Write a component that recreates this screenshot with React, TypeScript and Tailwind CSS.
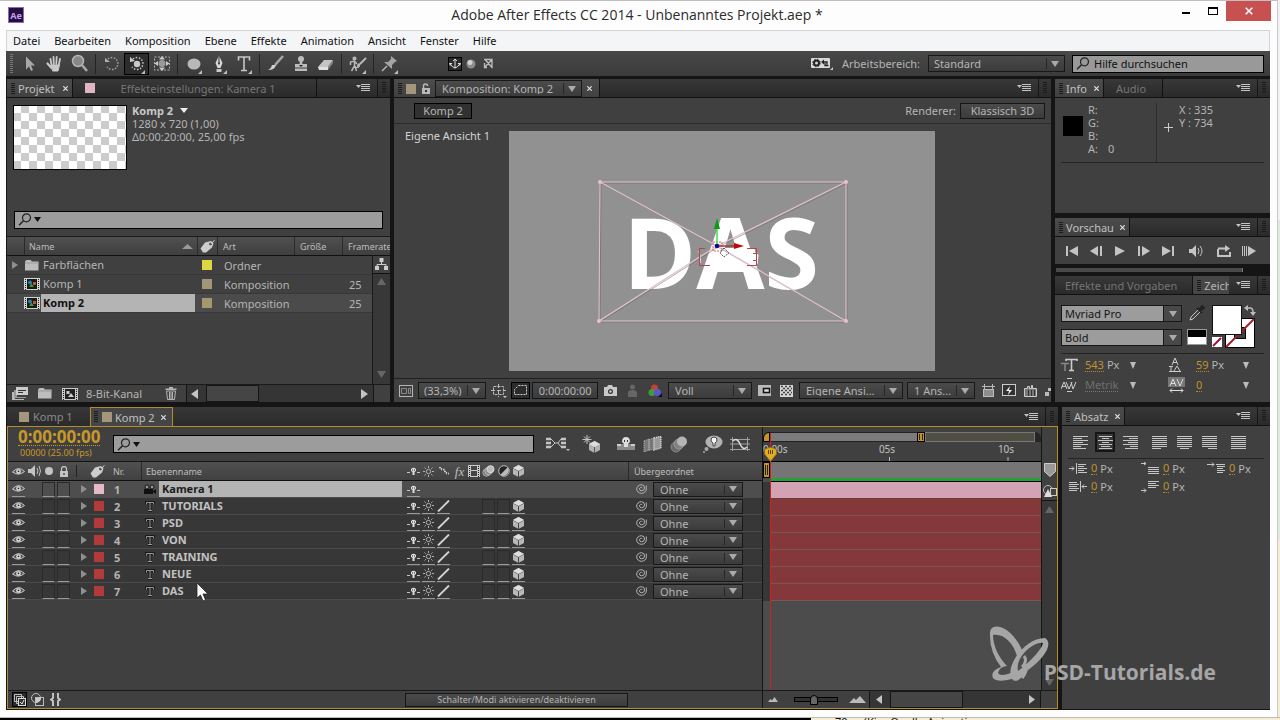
import React from 'react';

type Kids = { children?: React.ReactNode };

function Svg({ w, h, children, className = '' }: { w: number; h: number; className?: string } & Kids) {
  return (
    <svg width={w} height={h} viewBox={`0 0 ${w} ${h}`} className={`block shrink-0 ${className}`} aria-hidden="true">
      {children}
    </svg>
  );
}

const C = '#c4c4c4';

/* ---------- shared pieces ---------- */

function Grip() {
  return (
    <Svg w={4} h={12}>
      {[0, 2, 4, 6, 8, 10].map((y) => (
        <rect key={y} x={0} y={y} width={4} height={1} fill="#1b1b1b" />
      ))}
    </Svg>
  );
}

function PanelMenu() {
  return (
    <div className="ml-auto flex h-full items-stretch">
      <button aria-label="Bedienfeldmenü" className="flex w-[28px] items-center justify-center">
        <Svg w={14} h={8}>
          <path d="M0 1h5L2.500 4z" fill={C} />
          <path d="M5 .5h9M5 2.500h9M5 4.500h9M5 6.500h9" stroke={C} />
        </Svg>
      </button>
      <div className="flex w-[13px] items-center justify-center border-l border-[#161616]">
        <Grip />
      </div>
    </div>
  );
}

function TabBar({ children }: Kids) {
  return (
    <div className="flex h-[19px] shrink-0 items-stretch overflow-hidden whitespace-nowrap border-b border-[#111] bg-linear-to-b from-[#383838] to-[#2a2a2a]">
      {children}
      <PanelMenu />
    </div>
  );
}

function ActiveTab({ children, className = '' }: { className?: string } & Kids) {
  return (
    <div className={`-mb-px flex h-[19px] items-center border-r border-[#111] bg-linear-to-b from-[#4c4c4c] to-[#404040] pl-1 text-[#c0c0c0] ${className}`}>
      <Grip />
      {children}
    </div>
  );
}

function CloseX() {
  return (
    <button aria-label="Schließen" className="px-1">
      <Svg w={5} h={5}>
        <path d="M.3.3l4.400 4.400M4.700.3L.3 4.700" stroke="#e0e0e0" strokeWidth="1.200" />
      </Svg>
    </button>
  );
}

function Arrow() {
  return (
    <Svg w={8} h={6}>
      <path d="M0 0h8L4 6z" fill="#aaa" />
    </Svg>
  );
}

function Select({ label, value, className = '', box = 'w-[18px]', pad = 'pl-[6px]', field = false }: {
  label: string; value: string; className?: string; box?: string; pad?: string; field?: boolean;
}) {
  return (
    <div className={`relative shrink-0 border border-[#181818] ${field ? 'bg-[#9c9c9c]' : 'bg-linear-to-b from-[#4b4b4b] to-[#3b3b3b]'} ${className}`}>
      <select
        aria-label={label}
        defaultValue={value}
        className={`block h-full w-full appearance-none bg-transparent leading-none outline-none ${pad} ${field ? 'text-[#151515]' : 'text-[#b5b5b5]'}`}
      >
        <option>{value}</option>
      </select>
      <div className={`pointer-events-none absolute inset-y-0 right-0 flex items-center justify-center ${box} ${field ? 'border-l border-[#181818] bg-[#484848]' : ''}`}>
        {!field && <div className="absolute inset-y-[2px] left-0 w-px bg-[#262626]" />}
        <Arrow />
      </div>
    </div>
  );
}

function SearchGlyph({ color = '#222' }: { color?: string }) {
  return (
    <Svg w={14} h={13}>
      <circle cx={8.5} cy={4.8} r={4} fill="none" stroke={color} strokeWidth={1.2} />
      <path d="M5.500 7.800L1 12.300" stroke={color} strokeWidth={1.5} />
    </Svg>
  );
}

function SearchBox({ label, className = '' }: { label: string; className?: string }) {
  return (
    <label className={`flex h-[18px] items-center border border-black bg-[#9c9c9c] pl-[3px] ${className}`}>
      <SearchGlyph />
      <Svg w={7} h={5} className="ml-[2px]">
        <path d="M0 0h7L3.500 5z" fill="#111" />
      </Svg>
      <input aria-label={label} className="h-full min-w-0 flex-1 bg-transparent pl-1 text-[#111] outline-none" />
    </label>
  );
}

function Swatch({ color, className = '' }: { color: string; className?: string }) {
  return <span className={`block size-[10px] shrink-0 ${className}`} style={{ backgroundColor: color }} />;
}

function TagIcon() {
  return (
    <Svg w={15} h={13}>
      <path d="M.5 8.500L5 2.500 11 1l2.500 2.500-1.500 4L6 12.500H3z" fill="#cdcdcd" />
      <circle cx={10.500} cy={4} r={1.300} fill="#2c2c2c" />
      <path d="M10.500 4L14.500.5" stroke="#d8d8d8" />
    </Svg>
  );
}

/* ---------- title, menu, toolbar ---------- */

function TitleBar() {
  return (
    <header className="flex h-[30px] shrink-0 items-start border-t border-[#c2bfc0] bg-[#fdfdfd] pr-[6px]">
      <div className="ml-2 mt-[6px] flex size-4 items-center justify-center border border-[#8a6cc0] bg-[#26103f] text-[9px] font-bold leading-none text-[#c5a0f0]">Ae</div>
      <h1 className="flex-1 pl-[78px] pt-[3px] text-center font-['Open_Sans',sans-serif] text-[14px] leading-[22px] text-[#2b2b2b]">
        Adobe After Effects CC 2014 - Unbenanntes Projekt.aep *
      </h1>
      <button aria-label="Minimieren" className="flex h-5 w-[27px] items-center justify-center">
        <span className="mt-1 h-[2px] w-2 bg-black" />
      </button>
      <button aria-label="Maximieren" className="flex h-5 w-[27px] items-center justify-center">
        <span className="h-2 w-[10px] border border-t-2 border-black" />
      </button>
      <button aria-label="Fenster schließen" className="flex h-5 w-[45px] items-center justify-center bg-[#c75050]">
        <Svg w={8} h={8}>
          <path d="M.7.7l6.600 6.600M7.300.7L.7 7.300" stroke="#fff" strokeWidth={1.600} />
        </Svg>
      </button>
    </header>
  );
}

function MenuBar() {
  const items = ['Datei', 'Bearbeiten', 'Komposition', 'Ebene', 'Effekte', 'Animation', 'Ansicht', 'Fenster', 'Hilfe'];
  return (
    <nav className="flex h-[21px] shrink-0 items-center gap-[14px] border border-b-0 border-[#d3d3d5] bg-[#f4f5f7] pb-[2px] pl-[6px] text-[11px] text-[#111]">
      {items.map((t) => (
        <button key={t}>{t}</button>
      ))}
    </nav>
  );
}

const corner = <path d="M20 17l0 4-4 0z" fill="#bbb" />;

const tools: { name: string; icon: React.ReactNode; active?: boolean; sep?: boolean }[] = [
  { name: 'Auswahl', icon: <path d="M8 3.500v13l3-3 2 4.500 2-1-2-4.500h4z" fill="#a8a8a8" /> },
  {
    name: 'Hand',
    icon: (
      <g stroke="#c9c9c9" strokeLinecap="round" fill="none">
        <path d="M8.500 12L7.500 6M10.800 11l-.3-7M13.300 11l.4-7M15.800 12l1.200-6" strokeWidth={1.800} />
        <path d="M4.500 10.500l4 4.500" strokeWidth={2.200} />
        <path d="M8.500 12h8l-1.500 6H10z" fill="#c9c9c9" strokeWidth={1} />
      </g>
    ),
  },
  {
    name: 'Zoom', sep: true,
    icon: (
      <g>
        <circle cx={10} cy={8} r={5.500} fill="#888" stroke="#b5b5b5" strokeWidth={1.500} />
        <path d="M14 12l5 6" stroke="#aaa" strokeWidth={2.500} />
      </g>
    ),
  },
  {
    name: 'Drehung',
    icon: (
      <g fill="none" stroke="#a0a0a0">
        <path d="M8 6a6 6 0 1 1-1 8" strokeWidth={1.500} strokeDasharray="1.500 1.500" />
        <path d="M5 5l0 4 5 0z" fill="#b0b0b0" stroke="none" />
      </g>
    ),
  },
  {
    name: 'Kamera vereinheitlicht', active: true,
    icon: (
      <g>
        <path d="M8 6a6 6 0 1 1-1 8" fill="none" stroke="#c0c0c0" strokeWidth={1.500} strokeDasharray="1.500 1.500" />
        <path d="M5 4l0 5 5-1z" fill="#c9c9c9" />
        <circle cx={12} cy={11} r={3.200} fill="#c9c9c9" />
        {corner}
      </g>
    ),
  },
  {
    name: 'Ausschnitt', sep: true,
    icon: (
      <g>
        <rect x={4.500} y={4} width={15} height={13} fill="none" stroke="#b0b0b0" strokeDasharray="2 1.500" />
        <circle cx={12} cy={10.500} r={3.500} fill="#9a9a9a" />
        <path d="M12 3l3 3.500H9zM12 18l3-3.500H9zM4.500 10.500L8 8v5zM19.500 10.500L16 8v5z" fill="#ccc" />
      </g>
    ),
  },
  { name: 'Ellipse', icon: <g><ellipse cx={12} cy={11} rx={6.500} ry={5.500} fill="#b8b8b8" />{corner}</g> },
  {
    name: 'Zeichenstift',
    icon: (
      <g>
        <path d="M12 2.500l3.500 7.500-2 5h-3l-2-5z" fill="#d8d8d8" />
        <path d="M12 3v7" stroke="#333" />
        <circle cx={12} cy={10.500} r={1} fill="#333" />
        <rect x={9.500} y={16} width={5} height={3} fill="#c8c8c8" />
        {corner}
      </g>
    ),
  },
  { name: 'Text', sep: true, icon: <g><path d="M6.500 7.500V4h11v3.500M12 4v13.500M9 17.500h6" fill="none" stroke="#c8c8c8" strokeWidth={1.600} />{corner}</g> },
  { name: 'Pinsel', icon: <g><path d="M19 3l-8 9" stroke="#a8a8a8" strokeWidth={2.500} /><path d="M12 12c-1 4-4 5-8 5 2-1 3-2 4-5z" fill="#cfcfcf" /></g> },
  { name: 'Kopierstempel', icon: <g fill="#bcbcbc"><circle cx={12} cy={6} r={3} /><path d="M11 8h2l.5 3h4.500v3.500H6V11h4.500z" /><path d="M6 15.500h12V18H6z" /><path d="M10 12h4l-2 2z" fill="#222" /></g> },
  { name: 'Radiergummi', sep: true, icon: <g><path d="M4 14l6-7h9l-5 7z" fill="#c4c4c4" /><path d="M4 14h10v3H5z" fill="#e0e0e0" /><path d="M14 14l5-7v3l-5 7z" fill="#888" /></g> },
  {
    name: 'Roto-Pinsel', sep: true,
    icon: (
      <g fill="none" stroke="#b8b8b8" strokeWidth={1.500}>
        <circle cx={8.500} cy={5.500} r={1.300} fill="#b8b8b8" />
        <path d="M4.500 12V9l4-1 2.500 3M8.500 8v5l-3 5M9 13l1.500 5" />
        <path d="M20 5l-6 6" strokeWidth={2} />
        <path d="M14 11q0 4-4 4 2-1 2-4z" fill="#b8b8b8" strokeWidth={1} />
        <g stroke="none">{corner}</g>
      </g>
    ),
  },
  {
    name: 'Marionettenstift',
    icon: (
      <g>
        <path d="M13 3l6 5-2 1-3 3 0 4-8-7 4 0 3-3z" fill="#a4a4a4" />
        <path d="M9 13l-5 5" stroke="#bbb" strokeWidth={1.500} />
        {corner}
      </g>
    ),
  },
];

function Toolbar() {
  return (
    <div className="flex h-[25px] shrink-0 items-center bg-linear-to-b from-[#484848] to-[#3b3b3b] pr-[6px]">
      <div className="flex w-[11px] justify-center">
        <Svg w={3} h={20}>
          {[0, 2, 4, 6, 8, 10, 12, 14, 16, 18].map((y) => <rect key={y} y={y} width={3} height={1} fill="#777" />)}
        </Svg>
      </div>
      {tools.map((t) => (
        <React.Fragment key={t.name}>
          <button aria-label={t.name} className={`flex h-[22px] w-[25px] items-center justify-center ${t.active ? 'border border-black bg-[#2c2c2c]' : ''}`}>
            <Svg w={24} h={22}>{t.icon}</Svg>
          </button>
          {t.sep && <div className="mx-[3px] h-5 w-px bg-[#232323]" />}
        </React.Fragment>
      ))}
      <button aria-label="Lokaler Achsenmodus" className="ml-[46px] flex size-[14px] items-center justify-center border border-black bg-[#2a2a2a]">
        <Svg w={12} h={12}>
          <path d="M6 1v9.500M1.500 6.500Q6 13 10.500 6.500M4 3l2-2 2 2" fill="none" stroke="#ddd" />
          <path d="M0 5h3.500L1 8zM12 5H8.500L11 8z" fill="#ddd" />
        </Svg>
      </button>
      <button aria-label="Weltachsenmodus" className="flex w-[18px] justify-center">
        <Svg w={10} h={10}><circle cx={5} cy={5} r={4.500} fill="#8c8c8c" /><circle cx={4} cy={3.500} r={2.500} fill="#d0d0d0" /></Svg>
      </button>
      <button aria-label="Achsenmodus anzeigen" className="flex w-4 justify-center">
        <Svg w={11} h={11}>
          <path d="M1 1.500h8v8M2.500 2l7 8M9 1.500L1.500 9.500M1.500 5v5M1 9.500h3" fill="none" stroke="#bdbdbd" strokeWidth={1.300} />
        </Svg>
      </button>
      <div className="ml-auto flex items-center">
        <button aria-label="Einstellungen synchronisieren">
          <Svg w={22} h={13}>
            <rect x={0} y={1} width={19} height={10} rx={1} fill="#d8d8d8" />
            <circle cx={5.500} cy={6} r={2.500} fill="none" stroke="#222" strokeWidth={2} />
            <circle cx={5.500} cy={6} r={3.800} fill="none" stroke="#222" strokeWidth={1} strokeDasharray="1.500 1.500" />
            <path d="M12 5h4v2.500M17.500 8.500h-3.500V6" fill="none" stroke="#222" strokeWidth={1.300} />
            <path d="M10 5l3-2.500v5z" fill="#222" />
            <path d="M22 10v3h-3z" fill="#ccc" />
          </Svg>
        </button>
        <span className="ml-[9px]">Arbeitsbereich:</span>
        <Select label="Arbeitsbereich" value="Standard" className="ml-2 h-[17px] w-[137px]" pad="pl-[5px]" />
        <label className="ml-[7px] flex h-[18px] w-[192px] items-center border border-black bg-[#999] pl-[3px]">
          <SearchGlyph />
          <input aria-label="Hilfe durchsuchen" placeholder="Hilfe durchsuchen" className="h-full min-w-0 flex-1 bg-transparent pl-1 text-[11px] outline-none placeholder:text-[#111]" />
        </label>
      </div>
    </div>
  );
}

/* ---------- project panel ---------- */

function CompIcon() {
  return (
    <Svg w={16} h={12}>
      <rect width={16} height={12} fill="#d4d4d4" />
      <path d="M1.500 1v11M14.500 1v11" stroke="#222" strokeDasharray="1 1" strokeWidth={1} />
      <rect x={3} y={1} width={10} height={10} fill="#161a18" />
      <circle cx={6} cy={4.500} r={2} fill="#2b7fae" />
      <path d="M5 9l2.500-3.500L10 9z" fill="#3f9b35" />
      <rect x={9} y={4} width={3} height={3} fill="#b55a2a" />
    </Svg>
  );
}

function Folder() {
  return (
    <Svg w={14} h={11}>
      <path d="M0 1.500L1.500 0h4L7 1.500h6.500v9H0z" fill="#bdbdbd" />
      <path d="M0 3h13.500" stroke="#999" />
    </Svg>
  );
}

const assets = [
  { name: 'Farbflächen', kind: 'Ordner', color: '#dfd644', rate: '', folder: true },
  { name: 'Komp 1', kind: 'Komposition', color: '#a3957a', rate: '25' },
  { name: 'Komp 2', kind: 'Komposition', color: '#a3996f', rate: '25', selected: true },
];

function Th({ children, className = '' }: { className?: string } & Kids) {
  return (
    <th className="p-0 font-normal">
      <div className={`flex h-[18px] items-center overflow-hidden whitespace-nowrap text-[9px] leading-none text-[#bebebe] ${className}`}>{children}</div>
    </th>
  );
}

function ProjectPanel() {
  return (
    <section className="flex w-[383px] shrink-0 flex-col overflow-hidden bg-[#404040]">
      <TabBar>
        <ActiveTab>
          <span className="ml-[3px] mr-1">Projekt</span>
          <CloseX />
        </ActiveTab>
        <div className="flex w-[244px] items-center border-r border-[#111] pl-3 text-[#757575]">
          <Swatch color="#e0b4c4" />
          <span className="ml-[26px]">Effekteinstellungen: Kamera 1</span>
        </div>
      </TabBar>
      <div className="flex h-[105px] gap-[5px] pl-[6px] pt-[7px] leading-[13px]">
        <svg width={114} height={65} className="shrink-0" aria-hidden="true">
          <defs>
            <pattern id="chk" width={16} height={16} patternUnits="userSpaceOnUse">
              <rect width={16} height={16} fill="#fff" />
              <path d="M0 8h8v8H0zM8 0h8v8H8z" fill="#ccc" />
            </pattern>
          </defs>
          <rect x={0.5} y={0.5} width={113} height={64} fill="url(#chk)" stroke="#000" />
        </svg>
        <div className="-mt-px">
          <div className="flex items-center gap-[7px] font-bold text-[#c8c8c8]">
            Komp 2
            <Svg w={8} h={5}><path d="M0 0h8L4 5z" fill="#eee" /></Svg>
          </div>
          <div>1280 x 720 (1,00)</div>
          <div>Δ0:00:20:00, 25,00 fps</div>
        </div>
      </div>
      <div className="flex h-[34px] items-center border-b border-[#1a1a1a] px-[7px]">
        <SearchBox label="Projekt durchsuchen" className="flex-1" />
      </div>
      <div className="flex flex-1 items-stretch">
        <div className="min-w-0 flex-1">
          <table className="w-[calc(100%+18px)] table-fixed border-collapse text-left">
            <colgroup>
              <col className="w-[17px]" />
              <col className="w-[17px]" />
              <col />
              <col className="w-[20px]" />
              <col className="w-[77px]" />
              <col className="w-12" />
              <col className="w-12" />
            </colgroup>
            <thead>
              <tr className="border-b border-[#111] bg-linear-to-b from-[#505050] to-[#3f3f3f]">
                <Th />
                <th className="p-0 font-normal" colSpan={2}>
                  <div className="flex h-[18px] items-center justify-between border-l border-[#2a2a2a] pl-1 pr-1 text-[9px] leading-none text-[#bebebe]">
                    Name
                    <Svg w={11} h={5}><path d="M0 5h11L5.500 0z" fill="#999" /></Svg>
                  </div>
                </th>
                <Th className="border-l border-[#2a2a2a] pl-[2px]"><TagIcon /></Th>
                <Th className="border-l border-[#2a2a2a] pl-[5px]">Art</Th>
                <Th className="border-l border-[#2a2a2a] pl-[5px]">Größe</Th>
                <Th className="border-l border-[#2a2a2a] pl-[5px]">Framerate</Th>
              </tr>
            </thead>
            <tbody>
              {assets.map((a) => (
                <tr key={a.name} className={`h-[19px] border-b border-[#383838] ${a.selected ? 'bg-[#4b4b4b]' : ''}`}>
                  <td className="p-0" colSpan={2}>
                    <div className="flex items-center pl-[5px]">
                      {a.folder ? <Svg w={6} h={8} className="mr-[7px]"><path d="M0 0l6 4-6 4z" fill="#8f8f8f" /></Svg> : <span className="w-3" />}
                      {a.folder ? <Folder /> : <CompIcon />}
                    </div>
                  </td>
                  <td className="p-0">
                    <div className={`mr-[2px] h-[18px] truncate pl-[2px] leading-[18px] ${a.selected ? 'bg-[#b4b4b4] font-bold text-[#111]' : ''}`}>{a.name}</div>
                  </td>
                  <td className="p-0"><Swatch color={a.color} className="ml-[5px]" /></td>
                  <td className="p-0 pl-[7px] leading-none">{a.kind}</td>
                  <td />
                  <td className="p-0 pl-[7px] leading-none">{a.rate}</td>
                </tr>
              ))}
            </tbody>
          </table>
        </div>
        <div className="mt-[19px] flex w-[18px] flex-col items-center border-l border-[#191919] bg-[#383838]">
          <div className="flex h-[18px] w-full items-center justify-center border-b border-[#111] bg-[#404040]">
            <Svg w={13} h={13}>
              <path d="M4.500 0h4v4h-4zM0 8h4v4H0zM9 8h4v4H9z" fill="#ccc" />
              <path d="M6.500 4v2.500M2 8V6.500h9V8" fill="none" stroke="#ccc" />
            </Svg>
          </div>
          <Svg w={9} h={7} className="mt-1"><path d="M0 7h9L4.500 0z" fill="#666" /></Svg>
          <Svg w={9} h={7} className="mb-[6px] mt-auto"><path d="M0 0h9L4.500 7z" fill="#666" /></Svg>
        </div>
      </div>
      <div className="flex h-[18px] shrink-0 items-center border-t border-[#1a1a1a]">
        <button aria-label="Filmmaterial interpretieren" className="ml-[5px]">
          <Svg w={16} h={13}>
            <path d="M0 5h3v7h9v1H0z" fill="#bbb" /><path d="M2 3h3v7h9v1H2z" fill="#999" />
            <rect x={4} y={0} width={12} height={8} fill="#ccc" /><path d="M6 3.500h8M6 5.500h5" stroke="#333" />
          </Svg>
        </button>
        <button aria-label="Neuer Ordner" className="ml-[10px]"><Folder /></button>
        <button aria-label="Neue Komposition" className="ml-[10px]">
          <Svg w={16} h={12}>
            <rect width={16} height={12} fill="#c9c9c9" />
            <path d="M1.500 1v11M14.500 1v11" stroke="#222" strokeDasharray="1 1" />
            <rect x={3} y={1} width={10} height={10} fill="#222" />
            <path d="M4.500 3h3v3h-3zM6 9l3-4 3 4z" fill="#ccc" />
          </Svg>
        </button>
        <button className="ml-2">8-Bit-Kanal</button>
        <button aria-label="Löschen" className="ml-[23px]">
          <Svg w={12} h={13}>
            <path d="M4 0h4v1.500h3.500V3H.5V1.500H4z" fill="#b5b5b5" />
            <path d="M1.500 4h9l-1 8.500h-7zM4.500 5v7M6 5v7M7.500 5v7" fill="none" stroke="#b5b5b5" />
          </Svg>
        </button>
        <div className="ml-auto flex h-full w-[204px] shrink-0 items-center border-l border-[#151515] bg-[#353535]">
          <Svg w={7} h={10} className="ml-[4px]"><path d="M7 0v10L0 5z" fill={C} /></Svg>
          <div className="ml-2 h-full w-[53px] border border-[#151515] bg-[#454545]" />
          <Svg w={7} h={10} className="ml-auto mr-[5px]"><path d="M0 0v10l7-5z" fill={C} /></Svg>
          <div className="h-full w-[17px] border-l border-[#151515] bg-[#404040]" />
        </div>
      </div>
    </section>
  );
}

/* ---------- composition panel ---------- */

function Stage() {
  return (
    <svg width={426} height={240} viewBox="0 0 426 240" className="block shrink-0 bg-[#919191]" role="img" aria-label="Kompositionsansicht">
      <text x={114} y={158} className="font-['Open_Sans','Noto_Sans',sans-serif] text-[99px] font-bold" fill="#fff">DAS</text>
      <path d="M190 120q2 7 1 12M237 118h8l1 4 3 2-1 9-8-3z" stroke="#fff" fill="#fff" />
      <rect x={204} y={117} width={38} height={18} fill="#fff" />
      <g fill="none" stroke="#6e5a60" opacity={0.5} transform="translate(1 1)">
        <path d="M91 51h246v139H90zM91 51l117 64 129 75M337 51L208 115 90 190" />
      </g>
      <g fill="none" stroke="#dfc3cc">
        <path d="M91 51h246v139H90z" />
        <path d="M91 51l117 64 129 75M337 51L208 115 90 190" strokeWidth={1.300} />
      </g>
      <g fill="#e6c3ce">
        <circle cx={91} cy={51} r={2} /><circle cx={337} cy={51} r={2} /><circle cx={90} cy={190} r={2} /><circle cx={337} cy={190} r={2} />
      </g>
      <path d="M196 117.500h-5.500v17H201M238 117.500h9.500v17H238M248 122.500h-4M248 129.500h-4" fill="none" stroke="#b8434b" />
      <path d="M204 111h9v9h-9z" fill="none" stroke="#c66" strokeDasharray="2 1" />
      <path d="M215 117l5 5-5 4-4-4z" fill="none" stroke="#555" strokeDasharray="2 1" />
      <path d="M208 115V98" stroke="#3fe04a" strokeWidth={1.500} />
      <path d="M208 87l3 11h-6z" fill="#0a9c18" />
      <path d="M208 115h17" stroke="#a33" strokeWidth={1.500} />
      <path d="M235 115l-10-3v6z" fill="#c00808" />
      <circle cx={208} cy={115} r={2.300} fill="#0a0a8c" />
    </svg>
  );
}

function CompPanel() {
  return (
    <section className="flex min-w-0 flex-1 flex-col overflow-hidden bg-[#404040]">
      <TabBar>
        <ActiveTab>
          <Swatch color="#a3967a" className="ml-1" />
          <Svg w={8} h={11} className="ml-[6px]">
            <path d="M1.500 5V3a2 2 0 0 1 4 0" fill="none" stroke="#b8b8b8" strokeWidth={1.500} />
            <rect x={0} y={5} width={8} height={6} fill="#b8b8b8" /><rect x={3} y={7} width={2} height={2} fill="#333" />
          </Svg>
          <Select label="Komposition" value="Komposition: Komp 2" className="ml-[5px] h-[17px] w-[147px]" />
          <span className="ml-[1px] mr-[3px] flex"><CloseX /></span>
        </ActiveTab>
      </TabBar>
      <div className="flex h-[26px] shrink-0 items-center border-b border-[#2c2c2c] pl-5 pr-[6px]">
        <button className="h-4 w-[58px] border border-black bg-[#313131] leading-none">Komp 2</button>
        <span className="ml-auto mr-1">Renderer:</span>
        <button className="h-4 w-[85px] border border-[#151515] bg-linear-to-b from-[#4b4b4b] to-[#3b3b3b] leading-none">Klassisch 3D</button>
      </div>
      <div className="relative flex flex-1 items-center justify-center pr-[2px]">
        <span className="absolute left-[11px] top-[4px] text-[#d4d4d4]">Eigene Ansicht 1</span>
        <Stage />
      </div>
      <div className="flex h-6 shrink-0 items-center overflow-hidden border-t border-[#222] pl-[5px]">
        <button aria-label="Vorschau immer anzeigen">
          <Svg w={14} h={12}>
            <rect x={0.5} y={0.5} width={13} height={11} fill="none" stroke="#b5b5b5" />
            <path d="M2.500 3.500h5v5h-5zM9.500 3.500h2v5h-2z" fill="none" stroke="#888" />
          </Svg>
        </button>
        <Select label="Vergrößerung" value="(33,3%)" className="ml-[5px] h-[17px] w-[68px]" pad="pl-[5px]" />
        <button aria-label="Raster" className="ml-[5px]">
          <Svg w={16} h={14}>
            <path d="M2.500 2.500h10v8h-10z" fill="none" stroke="#bbb" strokeDasharray="3 1" />
            <path d="M7.500 0v13M0 6.500h15" fill="none" stroke="#bbb" strokeDasharray="4 2" />
            <path d="M12 12h4l-2 2z" fill="#ccc" />
          </Svg>
        </button>
        <button aria-label="Masken einblenden" className="ml-1 flex h-[17px] w-5 items-center justify-center border border-black bg-[#2c2c2c]">
          <Svg w={14} h={11}><path d="M4.500.5h8v9h-12v-5z" fill="none" stroke="#ccc" strokeDasharray="2 1" /></Svg>
        </button>
        <button className="ml-[2px] h-[17px] w-[68px] border border-[#151515] bg-linear-to-b from-[#494949] to-[#3b3b3b] leading-none">0:00:00:00</button>
        <button aria-label="Schnappschuss" className="ml-[6px]">
          <Svg w={13} h={11}><path d="M0 2h3l1-2h4l1 2h4v9H0z" fill="#c9c9c9" /><circle cx={6.500} cy={6.500} r={2.500} fill="#333" /><circle cx={6.500} cy={6.500} r={1.200} fill="#ccc" /></Svg>
        </button>
        <button aria-label="Schnappschuss anzeigen" className="ml-[10px]">
          <Svg w={11} h={13}><circle cx={5.500} cy={3} r={2.500} fill="#666" /><path d="M1 13V9q0-3 4.500-3T10 9v4z" fill="#666" /></Svg>
        </button>
        <button aria-label="Kanäle" className="ml-[10px]">
          <Svg w={14} h={13}><circle cx={6.500} cy={4} r={3.500} fill="#c4423c" /><circle cx={4} cy={8.500} r={3.500} fill="#3d9b40" /><circle cx={9.500} cy={8.500} r={3.500} fill="#5757c9" /><path d="M14 9v4h-4z" fill="#111" /></Svg>
        </button>
        <Select label="Auflösung" value="Voll" className="ml-[6px] h-[17px] w-[84px]" />
        <button aria-label="Relevanter Bereich" className="ml-[6px]">
          <Svg w={13} h={11}><rect width={13} height={11} fill="#b9b9b9" /><rect x={5.500} y={3.500} width={6} height={4} fill="#ddd" stroke="#111" strokeWidth={1.500} /></Svg>
        </button>
        <button aria-label="Transparenzraster" className="ml-[9px]">
          <Svg w={13} h={12}>
            <rect width={13} height={12} fill="#d5d5d5" />
            {[1, 3, 5, 7, 9].map((y, i) => <path key={y} d={i % 2 ? `M3 ${y + 0.5}h9` : `M1 ${y + 0.5}h11`} stroke="#444" strokeDasharray="2 2" strokeWidth={1.600} />)}
          </Svg>
        </button>
        <Select label="3D-Ansicht" value="Eigene Ansi..." className="ml-[6px] h-[17px] w-[104px]" />
        <Select label="Ansichtslayout" value="1 Ans..." className="ml-[4px] h-[17px] w-[68px]" />
        <button aria-label="Pixel-Seitenverhältnis" className="ml-[7px]">
          <Svg w={13} h={13}><path d="M0 2.500h13M2.500 0v5M10.500 0v5" stroke="#bbb" /><rect x={1.500} y={5.500} width={10} height={7} fill="#8d8d8d" stroke="#bbb" /></Svg>
        </button>
        <button aria-label="Schnelle Vorschau" className="ml-[7px]">
          <Svg w={15} h={13}><rect x={0.5} y={0.5} width={13} height={11} fill="#333" stroke="#ccc" /><path d="M8 2L4 7h3l-1 4 4-5H7z" fill="#eee" /></Svg>
        </button>
        <button aria-label="Zeitleiste" className="ml-[7px]">
          <Svg w={14} h={12}><path d="M.5 11.500v-8h3v-2h2v2h2v-3h1v3h4v8z" fill="#777" stroke="#ccc" /><path d="M4.500 5v6M7.500 5v6M10.500 5v6" stroke="#333" /></Svg>
        </button>
        <button aria-label="Flussdiagramm" className="ml-[7px]">
          <Svg w={6} h={12}><path d="M0 7h4v4H0zM3 3h3v3H3z" fill="#bbb" /></Svg>
        </button>
      </div>
    </section>
  );
}

/* ---------- right column ---------- */

function InfoPanel() {
  return (
    <section className="flex h-[134px] shrink-0 flex-col bg-[#404040]">
      <TabBar>
        <ActiveTab><span className="ml-[3px] mr-[3px]">Info</span><CloseX /></ActiveTab>
        <div className="flex w-[59px] items-center border-r border-[#111] pl-3 text-[#757575]">Audio</div>
      </TabBar>
      <div className="mx-[6px] flex h-[65px] border-b border-[#242424] pt-[5px] leading-[13px]">
        <div className="ml-[2px] mt-[13px] size-5 bg-black" />
        <dl className="ml-[5px] grid w-[69px] grid-cols-[20px_1fr] content-start border-r border-[#2a2a2a]">
          <dt>R:</dt><dd /><dt>G:</dt><dd /><dt>B:</dt><dd /><dt>A:</dt><dd>0</dd>
        </dl>
        <Svg w={9} h={9} className="ml-[7px] mt-[20px]"><path d="M4.500 0v9M0 4.500h9" stroke="#ccc" /></Svg>
        <div className="ml-[6px]">
          <div>X : 335</div>
          <div>Y : 734</div>
        </div>
      </div>
    </section>
  );
}

const transport: [string, number, string][] = [
  ['Erster Frame', 12, 'M0 0h2v10H0zM12 0v10L3 5z'],
  ['Vorheriger Frame', 12, 'M8 0v10L0 5zM10 0h2v10h-2z'],
  ['Abspielen', 12, 'M1 0l10 5L1 10z'],
  ['Nächster Frame', 12, 'M0 0h2v10H0zM4 0l8 5-8 5z'],
  ['Letzter Frame', 12, 'M0 0l9 5-9 5zM10 0h2v10h-2z'],
];

function PreviewPanel() {
  return (
    <section className="flex h-[46px] shrink-0 flex-col bg-[#404040]">
      <TabBar>
        <ActiveTab><span className="ml-[3px] mr-[2px]">Vorschau</span><CloseX /></ActiveTab>
      </TabBar>
      <div className="flex flex-1 items-center gap-3 pl-[11px]">
        {transport.map(([label, w, d]) => (
          <button key={label} aria-label={label}>
            <Svg w={w} h={10}><path d={d} fill={C} /></Svg>
          </button>
        ))}
        <button aria-label="Audio stummschalten" className="ml-[3px]">
          <Svg w={14} h={12}><path d="M0 4h3l4-4v12L3 8H0z" fill={C} /><path d="M9 3q2 3 0 6M11 1q4 5 0 10" fill="none" stroke={C} /></Svg>
        </button>
        <button aria-label="Loop" className="ml-[2px]">
          <Svg w={14} h={12}><path d="M1 4v7h12V7" fill="none" stroke={C} strokeWidth={2} /><path d="M1 3.500h8" stroke={C} strokeWidth={2} /><path d="M8 0l5 3.500L8 7z" fill={C} /></Svg>
        </button>
        <button aria-label="RAM-Vorschau" className="-ml-px">
          <Svg w={14} h={10}><path d="M.5 0v10M2.500 0v10M4.500 0v10" stroke={C} /><path d="M6 0l8 5-8 5z" fill={C} /></Svg>
        </button>
      </div>
    </section>
  );
}

function Num({ children, unit, off = false }: { unit?: string; off?: boolean } & Kids) {
  return (
    <span className="flex items-center gap-[3px] leading-[12px]">
      <button className={`border-b border-dotted ${off ? 'border-[#777] text-[#6f6f6f]' : 'border-[#b5882a] text-[#c1922c]'}`}>{children}</button>
      {unit}
    </span>
  );
}

function CharacterPanel() {
  return (
    <section className="flex flex-1 flex-col bg-[#404040]">
      <TabBar>
        <div className="flex w-[139px] items-center border-r border-[#111] pl-[10px] text-[#757575]">Effekte und Vorgaben</div>
        <div className="-mb-px flex w-9 items-center overflow-hidden bg-[#464646] pl-1">
          <Grip />
          <span className="ml-[3px]">Zeichen</span>
        </div>
      </TabBar>
      <div className="mx-[6px] flex h-[59px] border-b border-[#242424] pt-[10px]">
        <div className="flex flex-col gap-[7px]">
          <Select field label="Schriftfamilie" value="Myriad Pro" className="h-[17px] w-[121px]" pad="pl-[3px]" />
          <Select field label="Schriftschnitt" value="Bold" className="h-[17px] w-[121px]" pad="pl-[3px]" />
        </div>
        <div className="ml-[5px] flex w-5 flex-col items-center gap-2">
          <button aria-label="Pipette">
            <Svg w={16} h={16}><path d="M1 15l1-3 7-7 2 2-7 7z" fill="none" stroke="#c5c5c5" /><path d="M8 3l5 5M10 5l3-4 2 2-4 3z" stroke="#222" strokeWidth={2} fill="#222" /></Svg>
          </button>
          <button aria-label="Schwarz und Weiß" className="h-4 w-5 border border-[#999] bg-linear-to-b from-black from-50% to-white to-50%" />
        </div>
        <div className="relative ml-[5px] h-[44px] w-[44px]">
          <svg width={30} height={30} className="absolute left-[13px] top-[13px]" aria-hidden="true">
            <rect x={0.5} y={0.5} width={29} height={29} fill="#fff" stroke="#000" />
            <rect x={9.500} y={9.500} width={11} height={11} fill="#404040" stroke="#000" />
            <path d="M1 29L29 1" stroke="#a51f26" strokeWidth={2} />
          </svg>
          <button aria-label="Füllfarbe" className="absolute left-0 top-0 size-[30px] border border-[#111] bg-white" />
          <svg width={10} height={10} className="absolute left-0 top-[32px]" aria-hidden="true">
            <rect width={10} height={10} fill="#fff" /><path d="M1 9l8-8" stroke="#a0103a" strokeWidth={2} />
          </svg>
          <svg width={12} height={12} className="absolute left-[32px] top-0" aria-hidden="true">
            <path d="M3 3h3q3 0 3 4v1" fill="none" stroke="#bbb" strokeWidth={1.500} /><path d="M0 3l4-3v6zM6 7h6l-3 4z" fill="#bbb" />
          </svg>
        </div>
      </div>
      <div className="grid grid-cols-[24px_45px_38px_28px_47px_10px] items-center gap-y-[4px] pl-[6px] pt-[3px]">
        <Svg w={17} h={14}><path d="M0 5.500h8M4 5.500V13" stroke="#888" strokeWidth={1.500} /><path d="M5 3V1.500h11V3M10.500 1.500v11M8 12.500h5" fill="none" stroke="#ccc" strokeWidth={1.600} /></Svg>
        <Num unit="Px">543</Num>
        <Svg w={6} h={7}><path d="M0 0h6L3 7z" fill="#bbb" /></Svg>
        <Svg w={13} h={16}><path d="M4 8l3-7 3 7M5 5.500h4M1 9.500h4M3 9.500v5M1 14.500h12M6 14l3-5 3 5" fill="none" stroke="#ccc" /></Svg>
        <Num unit="Px">59</Num>
        <Svg w={6} h={7}><path d="M0 0h6L3 7z" fill="#bbb" /></Svg>
        <Svg w={17} h={16}><path d="M0 12l3-7 3 7M1 9.500h4M5 5l3 7 3-7M10 5l2 7 3-7M6 1.500h5M6 14.500h5" fill="none" stroke="#ccc" /></Svg>
        <Num off>Metrik</Num>
        <Svg w={6} h={7}><path d="M0 0h6L3 7z" fill="#bbb" /></Svg>
        <Svg w={17} h={16}><rect width={17} height={10} fill="#777" /><path d="M2 9l3-7 3 7M3 6.500h4M9 2l3 7 3-7M2 13.500h13M4 11.500l-2 2 2 2M13 11.500l2 2-2 2" fill="none" stroke="#ddd" /></Svg>
        <Num>0</Num>
        <Svg w={6} h={7}><path d="M0 0h6L3 7z" fill="#bbb" /></Svg>
      </div>
    </section>
  );
}

function Lines({ rows }: { rows: [number, number][] }) {
  return (
    <Svg w={15} h={15}>
      {rows.map(([x1, x2], i) => <path key={i} d={`M${x1} ${i * 2 + 1.5}H${x2}`} stroke="#c6c6c6" />)}
    </Svg>
  );
}

const full: [number, number] = [0, 15];
const aligns: { name: string; rows: [number, number][]; active?: boolean; gap?: string }[] = [
  { name: 'Linksbündig', rows: [[0, 15], [0, 9], [0, 15], [0, 10], [0, 15], [0, 8], [0, 13]] },
  { name: 'Zentriert', rows: [[1, 14], [4, 11], [0, 15], [4, 11], [1, 14], [3, 12], [1, 14]], active: true, gap: 'ml-[5px]' },
  { name: 'Rechtsbündig', rows: [[0, 15], [6, 15], [0, 15], [5, 15], [0, 15], [7, 15], [2, 15]], gap: 'ml-[5px]' },
  { name: 'Blocksatz links', rows: [full, full, full, full, full, full, [0, 9]], gap: 'ml-[9px]' },
  { name: 'Blocksatz zentriert', rows: [full, full, full, full, full, full, [3, 12]], gap: 'ml-[5px]' },
  { name: 'Blocksatz rechts', rows: [full, full, full, full, full, full, [6, 15]], gap: 'ml-[5px]' },
  { name: 'Blocksatz', rows: [full, full, full, full, full, full, full], gap: 'ml-[9px]' },
];

function IndentIcon({ kind }: { kind: number }) {
  const paths = [
    'M0 6.500h5M3 4.500l2 2-2 2M7.500 1v11M9 2.500h8M9 4.500h6M9 6.500h9M9 8.500h6M9 10.500h9',
    'M0 1.500h5M3 0l2 1.500L3 3M7 5.500h11M7 7.500h11M7 9.500h11M7 11.500h11',
    'M0 2.500h7M5 .5l2 2-2 2M9 2.500h9M10 4.500h8M10 6.500h6M10 8.500h8M10 10.500h6',
    'M0 2.500h8M0 4.500h10M0 6.500h8M0 8.500h10M0 10.500h8M11.500 1v11M18 6.500h-5M15 4.500l-2 2 2 2',
    'M7 1.500h11M7 3.500h8M7 5.500h11M7 7.500h8M0 10.500h5M3 8.500l2 2-2 2',
  ];
  return <Svg w={18} h={13}><path d={paths[kind]} fill="none" stroke="#c6c6c6" /></Svg>;
}

function ParagraphPanel() {
  return (
    <section className="flex w-[208px] shrink-0 flex-col bg-[#404040]">
      <TabBar>
        <ActiveTab><span className="ml-[4px] mr-[3px]">Absatz</span><CloseX /></ActiveTab>
      </TabBar>
      <div className="mx-[6px] flex h-[33px] items-center border-b border-[#242424] pl-[2px]">
        {aligns.map((a) => (
          <button key={a.name} aria-label={a.name} className={`flex size-5 shrink-0 items-center justify-center ${a.gap ?? ''} ${a.active ? 'border-2 border-[#151515] bg-[#383838]' : ''}`}>
            <Lines rows={a.rows} />
          </button>
        ))}
      </div>
      <div className="grid grid-cols-[72px_66px_50px] gap-y-[5px] pl-[7px] pt-[3px]">
        {[0, 1, 2, 3, 4].map((k) => (
          <div key={k} className="flex items-center gap-1">
            <IndentIcon kind={k} />
            <Num unit="Px">0</Num>
          </div>
        ))}
      </div>
    </section>
  );
}

/* ---------- timeline ---------- */

function Eye() {
  return (
    <Svg w={13} h={9}>
      <path d="M.5 5Q6.500-1.500 12.500 4.500 6.500 9.500.5 5z" fill="#555" stroke="#d0d0d0" />
      <circle cx={6.500} cy={4.500} r={2.300} fill="#e0e0e0" /><circle cx={6.500} cy={4.300} r={0.900} fill="#222" />
    </Svg>
  );
}
const Shy = () => <Svg w={13} h={8}><path d="M0 5.500h3M10 5.500h3" stroke={C} /><path d="M4 2q2.500-2.500 5 0v2L7.500 5v3h-2V5L4 4z" fill="#ddd" /><path d="M5.500 2.500v1M7.500 2.500v1" stroke="#222" /></Svg>;
const Sun = () => <Svg w={11} h={11}><circle cx={5.500} cy={5.500} r={2.200} fill="none" stroke="#b0b0b0" /><path d="M5.500 0v2M5.500 9v2M0 5.500h2M9 5.500h2M1.500 1.500l1.300 1.300M8.200 8.200l1.300 1.300M9.500 1.500L8.200 2.800M2.800 8.200L1.500 9.500" stroke="#b0b0b0" /></Svg>;
const Cube = () => <Svg w={11} h={12}><path d="M5.500 0L11 3v6l-5.500 3L0 9V3z" fill="#b8b8b8" /><path d="M0 3l5.500 3L11 3M5.500 6v6" fill="none" stroke="#444" /><path d="M5.500 0L11 3 5.500 6 0 3z" fill="#dedede" /></Svg>;
const Whip = () => (
  <Svg w={11} h={10}>
    <path d="M10.300 1.500v3.500a4.800 4.300 0 1 1-4.800-4.300 3.200 3 0 0 1 3 3.300 3 2.800 0 0 1-3 2.800 2 2 0 0 1-2-2 1.700 1.700 0 0 1 2.800-1.100" fill="none" stroke="#b5b5b5" />
  </Svg>
);

function Cell({ children }: Kids) {
  return <div className="flex h-[15px] w-[13px] items-center justify-center border-b border-[#9a9a9a]">{children}</div>;
}
function Box() {
  return <div className="h-[15px] w-[13px] border border-[#292929] border-b-[#9a9a9a]" />;
}

const layers = ['Kamera 1', 'TUTORIALS', 'PSD', 'VON', 'TRAINING', 'NEUE', 'DAS'];

function LayerTable() {
  return (
    <table className="w-full table-fixed border-separate border-spacing-0 text-left">
      <colgroup>
        <col className="w-5" /><col className="w-[14px]" /><col className="w-[15px]" /><col className="w-[15px]" />
        <col className="w-[18px]" /><col className="w-[18px]" /><col className="w-[33px]" /><col />
        <col className="w-[222px]" /><col className="w-[134px]" />
      </colgroup>
      <thead>
        <tr className="bg-linear-to-b from-[#505050] to-[#404040] [&>th]:border-b [&>th]:border-[#111]">
          <Th className="pl-1"><Eye /></Th>
          <Th><Svg w={13} h={12}><path d="M0 4h3l4-4v12L3 8H0z" fill={C} /><path d="M9 3q2 3 0 6M11 1q3 5 0 10" fill="none" stroke={C} /></Svg></Th>
          <Th className="pl-[3px]"><Svg w={8} h={8}><circle cx={4} cy={4} r={4} fill={C} /></Svg></Th>
          <Th className="pl-[3px]"><Svg w={8} h={11}><path d="M1.500 5V3a2.500 2.500 0 0 1 5 0v2" fill="none" stroke={C} strokeWidth={1.300} /><rect y={5} width={8} height={6} fill={C} /><rect x={3.500} y={7} width={1} height={2} fill="#222" /></Svg></Th>
          <Th className="pl-1"><span className="h-3 w-px bg-[#222]" /></Th>
          <Th><TagIcon /></Th>
          <Th className="pl-[5px]">Nr.</Th>
          <Th className="border-l border-[#2a2a2a] pl-1">Ebenenname</Th>
          <Th>
            <span className="flex w-[15px] justify-center"><Shy /></span>
            <span className="flex w-[15px] justify-center"><Sun /></span>
            <span className="flex w-[15px] justify-center"><Svg w={10} h={9}><path d="M0 .5h2.500v2H5v2h2.500v2H10v2" fill="none" stroke="#ccc" strokeDasharray="2 1" strokeWidth={1.300} /></Svg></span>
            <span className="w-[15px] pl-[2px] text-center font-['Liberation_Serif',serif] text-[13px] italic">fx</span>
            <span className="flex w-[15px] justify-center"><Svg w={12} h={12}><rect width={12} height={12} fill="#c9c9c9" /><path d="M1.500 1v11M10.500 1v11" stroke="#222" strokeDasharray="1 1" /><path d="M3 1h6v4H3zM3 6h6v5H3z" fill="#444" /></Svg></span>
            <span className="flex w-[15px] justify-center"><Svg w={13} h={12}><circle cx={4.500} cy={7.500} r={3.700} fill="#777" stroke="#aaa" /><circle cx={6.500} cy={6} r={3.700} fill="#888" stroke="#bbb" /><circle cx={8.500} cy={4.200} r={3.500} fill="#bbb" stroke="#ddd" /></Svg></span>
            <span className="flex w-[15px] justify-center"><Svg w={12} h={12}><circle cx={6} cy={6} r={5.300} fill="#222" stroke="#bbb" /><path d="M2.300 9.700A5.300 5.300 0 0 0 9.700 2.300z" fill="#bbb" /></Svg></span>
            <span className="flex w-[15px] justify-center"><Cube /></span>
          </Th>
          <Th className="border-l border-[#2a2a2a] pl-[5px]">Übergeordnet</Th>
        </tr>
      </thead>
      <tbody>
        {layers.map((name, i) => {
          const cam = i === 0;
          return (
            <tr key={name} className={`[&>td]:h-[17px] [&>td]:border-b [&>td]:border-[#4b4b4b] ${cam ? 'bg-[#4e4e4e]' : 'bg-[#373737]'}`}>
              <td className="p-0 pl-1"><Cell><Eye /></Cell></td>
              <td />
              <td className="p-0"><Box /></td>
              <td className="p-0"><Box /></td>
              <td className="p-0 pl-[9px]"><Svg w={6} h={8}><path d="M0 0l6 4-6 4z" fill="#8f8f8f" /></Svg></td>
              <td className="p-0 pl-1"><Swatch color={cam ? '#e5b9ca' : '#b23a3a'} /></td>
              <td className="p-0 pl-[6px] font-bold leading-none">{i + 1}</td>
              <td className="p-0">
                <div className="mr-1 flex h-4 items-center">
                  <span className="flex w-[18px] justify-center">
                    {cam ? (
                      <Svg w={12} h={11}><path d="M0 5h9v5H0zM9 7l3-2v5l-3-2z" fill="#111" /><circle cx={3} cy={3} r={2} fill="#999" stroke="#111" /><circle cx={8} cy={3} r={2} fill="#999" stroke="#111" /></Svg>
                    ) : (
                      <Svg w={10} h={11}><path d="M1.500 3.500v-2h7v2M5 1.500v8M3 9.500h4" fill="none" stroke="#1a1a1a" strokeWidth={3} /><path d="M1.500 3.500v-2h7v2M5 1.500v8M3 9.500h4" fill="none" stroke="#999" /></Svg>
                    )}
                  </span>
                  <span className={`h-full flex-1 truncate pl-[3px] font-bold leading-[16px] ${cam ? 'bg-[#b4b4b4] text-[#1c1c1c]' : 'text-[#c2c2c2]'}`}>{name}</span>
                </div>
              </td>
              <td className="p-0">
                <div className="flex gap-[2px] pl-px">
                  <Cell><Shy /></Cell>
                  {!cam && (
                    <>
                      <Cell><Sun /></Cell>
                      <Cell><Svg w={13} h={12}><path d="M1 11.500L12 .5" stroke="#d5d5d5" strokeWidth={1.800} /></Svg></Cell>
                      <span className="w-[28px]" />
                      <Box /><Box />
                      <Cell><Cube /></Cell>
                    </>
                  )}
                </div>
              </td>
              <td className="p-0">
                <div className="flex items-center pl-2">
                  <button aria-label={`Gummiband ${name}`}><Whip /></button>
                  <Select label={`Übergeordnet ${name}`} value="Ohne" className="ml-[6px] h-[15px] w-[90px]" />
                </div>
              </td>
            </tr>
          );
        })}
      </tbody>
    </table>
  );
}

function TimelineTools() {
  return (
    <div className="flex h-[35px] shrink-0 items-center border-b border-[#151515]">
      <div className="ml-[10px] w-[86px] text-[#c6982a]">
        <button className="block border-b border-dotted border-[#c6982a] text-[17px] font-bold leading-[16px]">0:00:00:00</button>
        <div className="pl-[2px] text-[9px] leading-[13px]">00000 (25.00 fps)</div>
      </div>
      <SearchBox label="Ebenen durchsuchen" className="ml-[9px] min-w-0 flex-1" />
      <div className="flex w-[228px] shrink-0 items-center pl-3">
        <Svg w={24} h={14}>
          <path d="M0 2h5M0 6h5M0 10h5M15 2h5M15 6h5M15 10h5" stroke={C} strokeWidth={2.500} />
          <path d="M5 2l4 4h3l3-4M5 10l4-4M12 6l3 4" fill="none" stroke={C} /><path d="M20 12h4l-2 2z" fill={C} />
        </Svg>
        <Svg w={19} h={18} className="ml-3">
          <path d="M5 0v9M.5 4.500h9M2 1.500l6 6M8 1.500l-6 6" stroke={C} />
          <path d="M12.500 6l5.500 3v6l-5.500 3L7 15V9z" fill="#b0b0b0" /><path d="M12.500 6L18 9l-5.500 3L7 9z" fill="#ddd" /><path d="M12.500 12v6" stroke="#555" />
        </Svg>
        <Svg w={18} h={14} className="ml-4"><path d="M0 7h18v6H0z" fill="#8b8b8b" /><path d="M0 7h4v2H0zM14 7h4v2h-4z" fill="#ccc" /><path d="M5 5q0-5 4-5t4 5l-2 2v3H7V7z" fill="#ddd" /><path d="M7.500 3v2M10.500 3v2" stroke="#333" /></Svg>
        <Svg w={19} h={16} className="ml-2">
          <path d="M1 5l5-2v11l-5 2zM6 3.500l5-1.500v11l-5 1.500z" fill="#777" stroke="#bbb" strokeDasharray="1 1" />
          <path d="M11 2l7-2v12l-7 2z" fill="#999" stroke="#ddd" strokeDasharray="1 1" strokeWidth={1.500} />
        </Svg>
        <Svg w={18} h={17} className="ml-2"><circle cx={6} cy={11} r={5} fill="#6a6a6a" stroke="#888" /><circle cx={9} cy={8} r={5} fill="#808080" stroke="#999" /><circle cx={12} cy={5.500} r={5} fill="#b5b5b5" /></Svg>
        <Svg w={20} h={18} className="ml-[15px]"><ellipse cx={11} cy={7} rx={8.500} ry={6.500} fill="#b3b3b3" /><circle cx={3.500} cy={14} r={2} fill="#aaa" /><circle cx={1} cy={17} r={1} fill="#aaa" /><path d="M8 5a3 3 0 0 1 6 0q0 2-2 3v3h-2V8Q8 7 8 5z" fill="#f2f2f2" stroke="#444" /></Svg>
        <Svg w={20} h={14} className="ml-[7px]"><path d="M0 2.500h20M0 7h20M2.500 0v14M17.500 0v14M0 12.500h20" stroke="#a0a0a0" /><path d="M3 4Q7 0 10 7t7 3" fill="none" stroke="#ddd" strokeWidth={1.500} /></Svg>
      </div>
    </div>
  );
}

function TimeGraph() {
  return (
    <div className="flex w-[295px] shrink-0 flex-col border-l border-[#161616]">
      <div className="flex min-h-0 flex-1">
        <div className="relative flex min-w-0 flex-1 flex-col bg-[#4c4c4c]">
          <div className="h-[35px] shrink-0 border-b border-black bg-[#404040] pt-[5px]">
            <div className="flex h-[10px] items-stretch">
              <button aria-label="Zeitbereich Anfang" className="w-[7px] rounded-tl-md border border-black bg-[#c3932a]" />
              <div className="w-[147px] border-y border-[#222] bg-[#7b7b7b]" />
              <button aria-label="Zeitbereich Ende" className="flex w-2 items-center justify-center border border-black bg-[#c3932a]"><Svg w={4} h={6}><path d="M.5 0v6M3.500 0v6" stroke="#222" /></Svg></button>
              <div className="w-[110px] border border-[#777] bg-[#504d42]" />
              <div className="flex-1 rounded-tr-md bg-[#262626]" />
            </div>
            <div className="flex text-[10px] leading-[15px] text-[#c0c0c0]">
              <span className="w-[60px]">0:00s</span>
              <span className="ml-[34px] w-[60px] text-center">05s</span>
              <span className="ml-[59px] w-[60px] text-center">10s</span>
            </div>
            <svg width={278} height={4} className="block" aria-hidden="true"><path d="M126.500 0v4M245 0v4" stroke="#bbb" /></svg>
          </div>
          <div className="flex h-[16px] shrink-0">
            <button aria-label="Arbeitsbereich Anfang" className="flex w-[7px] items-center justify-center border border-black bg-[#c3932a]"><Svg w={3} h={10}><path d="M.5 0v10M2.500 0v10" stroke="#222" /></Svg></button>
            <div className="flex-1 bg-[#757575]" />
          </div>
          <div className="ml-[7px] h-1 shrink-0 border-b border-black bg-[#27a038]" />
          <div className="shrink-0 bg-[#373737] pl-[7px]">
            {layers.map((n, i) => (
              <div key={n} className={`h-[17px] border-b ${i === 0 ? 'border-[#6b3a3a] bg-[#d3a2b3]' : 'border-[#7a5653] bg-[#843839]'}`} />
            ))}
          </div>
          <div className="absolute bottom-0 left-[7px] top-[6px] w-px bg-[#d02020]" />
          <svg width={13} height={15} className="absolute left-[1px] top-[20px]" aria-hidden="true">
            <path d="M.5 2.500Q6.500-1.500 12.500 2.500V7L6.500 14.500.5 7z" fill="#e0ab25" stroke="#8d6a14" /><path d="M4.500 3v4M6.500 3v4M8.500 3v4" stroke="#5a430c" />
          </svg>
        </div>
        <div className="flex w-4 shrink-0 flex-col items-center border-l border-[#161616] bg-[#404040]">
          <Svg w={12} h={14} className="mt-[36px]"><path d="M.5.5h11v8L6 13.500.5 8.500z" fill="#999" stroke="#ccc" /></Svg>
          <Svg w={14} h={12} className="mt-2"><circle cx={5} cy={5} r={4.500} fill="none" stroke="#bbb" /><rect x={7.500} y={3.500} width={6} height={7} fill="#444" stroke="#ccc" /><path d="M1 12l4-8 4 8z" fill="#ddd" /></Svg>
          <div className="mt-[3px] flex w-full flex-1 flex-col items-center border-t border-[#151515] bg-[#383838]">
            <Svg w={9} h={7} className="mt-[5px]"><path d="M0 7h9L4.500 0z" fill="#666" /></Svg>
            <Svg w={9} h={7} className="mb-1 mt-auto"><path d="M0 0h9L4.500 7z" fill="#666" /></Svg>
          </div>
        </div>
      </div>
      <div className="flex h-[18px] shrink-0 items-center border-t border-[#1a1a1a]">
        <Svg w={10} h={5} className="ml-[5px]"><path d="M0 5l2.500-3L4 3.500 6.500 0 10 5z" fill="#bbb" /></Svg>
        <input aria-label="Zoom" type="range" min={0} max={100} defaultValue={45} className="ml-4 h-[5px] w-[44px] appearance-none border border-black bg-[#333] [&::-webkit-slider-thumb]:h-[10px] [&::-webkit-slider-thumb]:w-2 [&::-webkit-slider-thumb]:appearance-none [&::-webkit-slider-thumb]:rounded-t-sm [&::-webkit-slider-thumb]:border [&::-webkit-slider-thumb]:border-black [&::-webkit-slider-thumb]:bg-[#666]" />
        <Svg w={17} h={7} className="ml-[11px]"><path d="M0 7l5-5 2 2 4-4 6 7z" fill="#bbb" /></Svg>
        <div className="ml-[3px] flex h-full flex-1 items-center border-x border-[#151515] bg-[#353535]">
          <Svg w={6} h={9} className="ml-[6px]"><path d="M6 0v9L0 4.500z" fill={C} /></Svg>
          <div className="ml-2 h-full w-[73px] border border-[#151515] bg-[#454545]" />
          <Svg w={6} h={9} className="ml-auto mr-[5px]"><path d="M0 0v9l6-4.500z" fill={C} /></Svg>
        </div>
        <div className="w-4" />
      </div>
    </div>
  );
}

function Timeline() {
  return (
    <section className="flex min-w-0 flex-1 flex-col bg-[#404040]">
      <div className="flex h-[19px] shrink-0 items-stretch overflow-hidden whitespace-nowrap bg-linear-to-b from-[#383838] to-[#2a2a2a]">
        <div className="flex w-[83px] items-center pl-3 text-[#8a8a8a]">
          <Swatch color="#a3967a" /><span className="ml-1">Komp 1</span>
        </div>
        <div className="flex w-[83px] items-center border border-b-0 border-[#b58c2c] bg-[#454545] pl-[3px] text-[#c0c0c0]">
          <Grip /><Swatch color="#a3967a" className="ml-1" /><span className="ml-[3px] mr-[2px]">Komp 2</span><CloseX />
        </div>
        <PanelMenu />
      </div>
      <div className="flex min-h-0 flex-1 border border-[#b58c2c]">
        <div className="flex min-w-0 flex-1 flex-col">
          <TimelineTools />
          <LayerTable />
          <div className="mt-auto flex h-[18px] shrink-0 items-center border-t border-[#1a1a1a] pl-1">
            <button aria-label="Ebenenschalter" className="flex size-[15px] items-center justify-center border border-black bg-[#2a2a2a]">
              <Svg w={12} h={12}><path d="M.5.5h7v7h-7zM2.500 2.500h7v7h-7z" fill="none" stroke="#bbb" /><rect x={4.500} y={4.500} width={7} height={7} fill="#333" stroke="#ddd" /><path d="M6 8l2 2 2-4" fill="none" stroke="#ddd" /></Svg>
            </button>
            <button aria-label="Modi" className="ml-1"><Svg w={13} h={13}><circle cx={5} cy={5} r={4.500} fill="none" stroke="#bbb" /><rect x={4.500} y={4.500} width={8} height={8} fill="none" stroke="#bbb" /><path d="M5 5h5q0 4-5 5z" fill="#ccc" /></Svg></button>
            <button aria-label="In/Out" className="ml-[6px]"><Svg w={11} h={13}><path d="M4 .5H3V5L1 6.500 3 8v4.500h1M7 .5h1V5l2 1.500L8 8v4.500H7" fill="none" stroke="#ccc" strokeWidth={1.800} /></Svg></button>
            <button className="ml-auto mr-[134px] h-[14px] w-[223px] border border-[#151515] bg-linear-to-b from-[#4b4b4b] to-[#3c3c3c] text-[9px] leading-none">Schalter/Modi aktivieren/deaktivieren</button>
          </div>
        </div>
        <TimeGraph />
      </div>
    </section>
  );
}

/* ---------- overlays ---------- */

function Watermark() {
  return (
    <div className="pointer-events-none absolute bottom-[38px] right-[64px] flex items-end text-[#a6a6a6]">
      <svg width={61} height={56} viewBox="0 0 61 56" aria-hidden="true">
        <path fillRule="evenodd" d="M2 3C8-4 24 4 33 24l-5 6C24 16 14 7 4 9 4 20 10 32 18 40q-8 1-9 7 2 4 13 0l1 6Q8 57 4 52 1 45 12 41 0 25 1 6z" fill="#a6a6a6" />
        <path fillRule="evenodd" d="M24 54C14 44 34 12 56 12c10 6-4 24-20 34-5 9-9 10-12 8zM29 45C40 37 54 22 54 17 46 15 26 30 29 45z" fill="#a6a6a6" />
        <path d="M35 30q4 5-2 11M37 38q2 7-4 14" stroke="#a6a6a6" strokeWidth={3} fill="none" />
      </svg>
      <span className="-ml-[6px] font-['Open_Sans',sans-serif] text-[21px] font-bold leading-[19px]">PSD-Tutorials.de</span>
    </div>
  );
}

export default function App() {
  return (
    <div className="relative flex h-screen flex-col overflow-hidden bg-[#fdfdfd] font-['Noto_Sans','Open_Sans',sans-serif] text-[11px] leading-[15px] text-[#b5b5b5]">
      <div className="flex min-h-0 flex-1">
        <div className="flex min-w-0 flex-1 flex-col">
          <TitleBar />
          <div className="mb-[7px] ml-[6px] mr-[7px] flex min-h-0 flex-1 flex-col">
            <MenuBar />
            <main className="flex min-h-0 flex-1 flex-col bg-[#151515]">
              <Toolbar />
              <div className="mt-[3px] flex h-[323px] shrink-0 gap-1 pl-px">
                <ProjectPanel />
                <CompPanel />
                <div className="flex w-[215px] shrink-0 flex-col overflow-hidden">
                  <InfoPanel />
                  <div className="h-[5px] shrink-0" />
                  <PreviewPanel />
                  <div className="flex h-3 shrink-0 items-center pl-px"><div className="h-1 w-[187px] border-r border-[#777] bg-[#4a4a4a]" /></div>
                  <CharacterPanel />
                </div>
              </div>
              <div className="mt-[5px] flex min-h-0 flex-1 gap-1 pb-px pl-px">
                <Timeline />
                <ParagraphPanel />
              </div>
            </main>
          </div>
        </div>
        <div className="flex w-[3px] shrink-0 flex-col border-l border-[#c9c9c9]">
          <div className="h-[220px] bg-[#f2f2f4]" />
          <div className="h-[320px] bg-[#dcebdc]" />
          <div className="flex-1 bg-[#f6ecd2]" />
        </div>
      </div>
      <div className="flex h-[3px] shrink-0 overflow-hidden border-t border-[#bbb]">
        <div className="w-[811px] bg-black" />
        <div className="flex flex-1 items-start gap-4 bg-[#f6ecd2] pl-6 text-[11px] leading-[7px] text-[#111]"><span>70</span><span>(Kim-Qualle-Animation</span></div>
      </div>
      <Watermark />
      <svg width={12} height={20} className="pointer-events-none absolute left-[196px] top-[582px]" aria-hidden="true">
        <path d="M1 1v15l3.500-3 2.500 6 2.500-1-2.500-6H12z" fill="#fff" stroke="#222" strokeWidth={0.800} />
      </svg>
    </div>
  );
}
